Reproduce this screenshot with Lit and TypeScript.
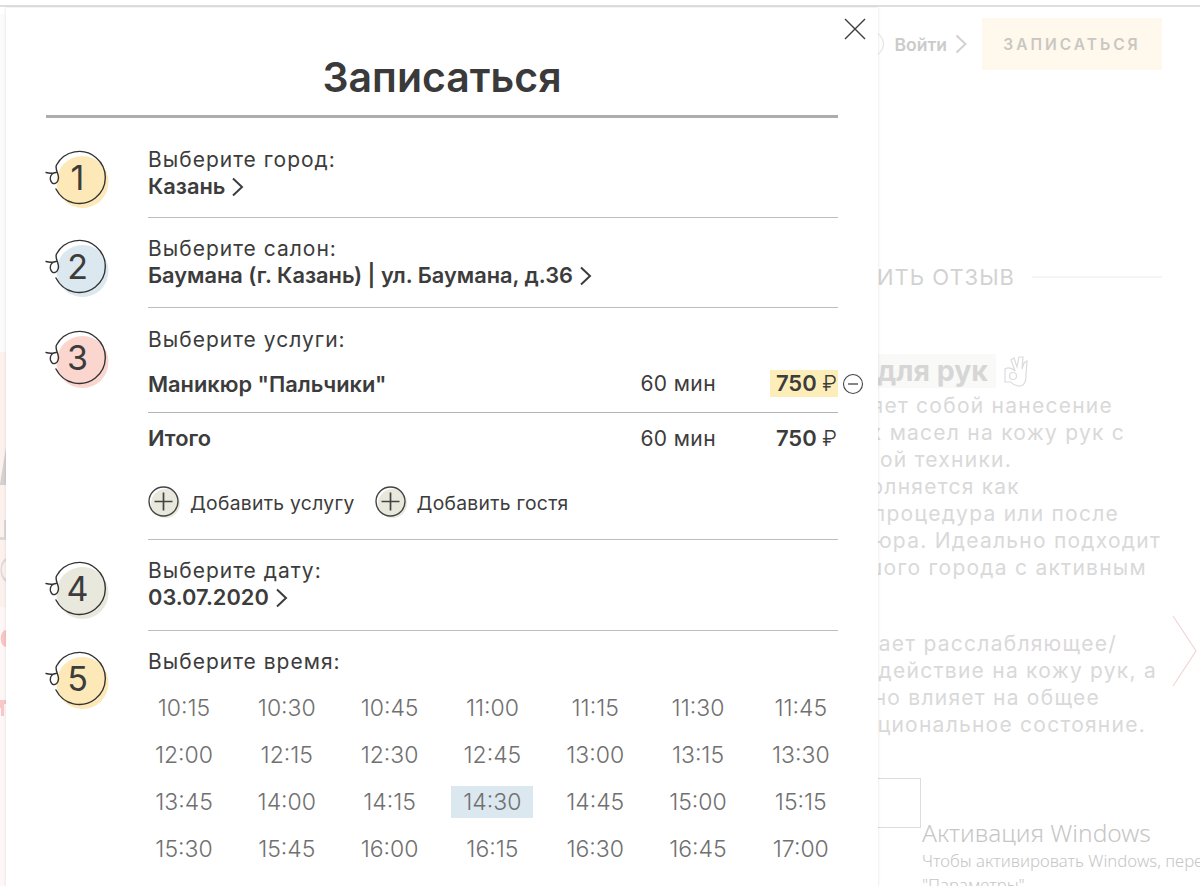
import { LitElement, html, css, svg } from "lit";
import { customElement } from "lit/decorators.js";

const TIMES = [
  "10:15","10:30","10:45","11:00","11:15","11:30","11:45",
  "12:00","12:15","12:30","12:45","13:00","13:15","13:30",
  "13:45","14:00","14:15","14:30","14:45","15:00","15:15",
  "15:30","15:45","16:00","16:15","16:30","16:45","17:00",
];

const PARA1 = [
  ["Представляет собой нанесение", 1113],
  ["эфирных масел на кожу рук с", 1125],
  ["специальной техники.", 1012],
  ["Выполняется как", 1020],
  ["отдельная процедура или после", 1119],
  ["маникюра. Идеально подходит", 1161],
  ["жителей большого города с активным", 1147],
] as const;
const PARA2 = [
  ["Оказывает расслабляющее/", 1117],
  ["воздействие на кожу рук, а", 1157],
  ["положительно влияет на общее", 1100],
  ["эмоциональное состояние.", 1146],
] as const;

const chevron = svg`<path d="M1.5 1.5l9 8.5-9 8.5" fill="none" stroke="currentColor" stroke-width="2"/>`;

function badge(n: number, color: string) {
  return html`<div class="badge">
    <svg class="ring" viewBox="0 0 66 62" width="66" height="62">
      <circle cx="38.5" cy="33" r="26" fill=${color}></circle>
      <path d="M12 40 A26 26 0 1 0 12.500 16 C10.500 20 15 25 14.500 29 C14 35 8 37 6.500 31 C5.500 26 9 23.500 12 23.500 M2 23.500 Q7 25 12 23.500"
        fill="none" stroke="#333" stroke-width="1.4" stroke-linecap="round"></path>
    </svg>
    <span class="num">${n}</span>
  </div>`;
}

function plus() {
  return html`<svg class="plus" viewBox="0 0 34 34" width="34" height="34">
    <circle cx="17.5" cy="17.5" r="14.5" fill="#e8e8dc"></circle>
    <circle cx="15.5" cy="15.5" r="14.5" fill="none" stroke="#444" stroke-width="1.4"></circle>
    <path d="M15.5 6.5v18M6.5 15.5h18" stroke="#444" stroke-width="1.7" fill="none"></path>
  </svg>`;
}

@customElement("app-root")
export class AppRoot extends LitElement {
  static styles = css`
    :host { display: block; width: 1200px; height: 886px; overflow: hidden; position: relative; background: #fff;
      font-family: Inter, "Noto Sans", sans-serif; color: #3c3c3c; }
    .topline { height: 2px; margin-top: 5px; background: #dedede; }

    /* dimmed page behind the dialog */
    .page { position: absolute; inset: 7px 0 0 0; overflow: hidden; }
    .strip { position: absolute; left: 0; top: 7px; width: 6px; height: 872px; }
    .pagehead { display: flex; justify-content: flex-end; align-items: center; padding: 11px 38px 0 0; height: 52px; }
    .login { display: flex; align-items: center; gap: 8px; font-size: 17.5px; font-weight: 600; color: #cbcbcb; margin-right: 14px; }
    .login svg { color: #cfcfcf; }
    .avatar { width: 24px; height: 24px; border: 1px solid #ddd; border-radius: 50%; margin-right: 11px; }
    .cta { width: 180px; height: 52px; background: #fef9ec; color: #c9c7c2; font-size: 15.5px; font-weight: 600;
      letter-spacing: 3px; display: flex; align-items: center; justify-content: center; }
    .review { display: flex; justify-content: flex-end; align-items: center; gap: 17px; margin-top: 194px; padding-right: 38px; }
    .review span { font-size: 22px; color: #d2d2d2; letter-spacing: 1px; white-space: nowrap; }
    .review i { width: 130px; height: 2px; background: #f5f5f5; }
    .heading { display: flex; justify-content: flex-end; align-items: center; margin-top: 64px; padding-right: 172px; gap: 8px; }
    .heading b { font-size: 28.5px; font-weight: 700; color: #d6d6d6; background: #f9f9f7; padding: 0 8px 0 300px; line-height: 34px; white-space: nowrap; }
    .para { margin-top: 4px; }
    .para2 { margin-top: 49px; }
    .line { font-size: 21px; line-height: 27px; letter-spacing: 1.25px; color: #d9d9d9; white-space: nowrap;
      display: flex; justify-content: flex-end; }
    .nextarrow { position: absolute; right: 2px; top: 608px; }
    .outline { position: absolute; left: 700px; top: 771px; width: 219px; height: 48px; border: 1px solid #ddd; }
    .watermark { position: absolute; left: 922px; top: 817px; color: #c6c6c6; font-family: "Noto Sans", sans-serif; white-space: nowrap; }
    .watermark div { font-size: 16.8px; line-height: 24px; font-weight: 300; }
    .watermark div.wm-title { font-size: 24.5px; font-weight: 300; line-height: 32px; }

    /* dialog */
    .modal { position: absolute; left: 6px; top: 8px; width: 872px; height: 878px; box-sizing: border-box; background: #fff;
      box-shadow: 0 0 3px rgba(0,0,0,.12); padding: 0 40px; }
    .close { position: absolute; left: 838px; top: 10px; }
    h1 { margin: 0; height: 110px; box-sizing: border-box; padding-top: 44px; text-align: center; font-size: 41px; line-height: 50px;
      font-weight: 600; color: #3a3a3a; border-bottom: 3px solid #adadad; }
    .step { display: flex; }
    .step + .step .body { border-top: 1px solid #bdbdbd; }
    .side { width: 102px; flex: none; }
    .body { flex: 1; min-width: 0; }
    .badge { position: relative; width: 66px; height: 62px; margin-left: -2px; display: flex; align-items: center; justify-content: center; }
    .ring { position: absolute; left: 0; top: 0; }
    .num { position: relative; font-size: 34px; line-height: 58px; padding-bottom: 4px; font-weight: 400; color: #3c3c3c; margin-left: 1px; }
    .label { font-size: 21px; line-height: 27px; letter-spacing: 1px; color: #3c3c3c; white-space: nowrap; }
    .value { font-size: 21.8px; line-height: 27px; font-weight: 600; color: #3c3c3c; display: flex; align-items: center; gap: 6px; white-space: nowrap; }
    .value svg { margin-top: 1px; flex: none; }

    .s1 { height: 99px; box-sizing: border-box; }
    .s1 .body { border-top: none; padding-top: 28px; }
    .s1 .side { padding-top: 31px; }
    .s2 .body { padding-top: 17px; height: 90px; box-sizing: border-box; }
    .s2 .side { padding-top: 21px; }
    .s3 .body { padding-top: 18px; height: 232px; box-sizing: border-box; }
    .s3 .side { padding-top: 22px; }
    .s4 .body { padding-top: 17px; height: 91px; box-sizing: border-box; }
    .s4 .side { padding-top: 21px; }
    .s5 .body { padding-top: 17px; }
    .s5 .side { padding-top: 20px; }

    .svc { display: grid; grid-template-columns: 1fr 90px 122px; align-items: center; position: relative;
      font-size: 21.8px; font-weight: 600; white-space: nowrap; }
    .svc .dur { font-weight: 400; font-size: 21px; text-align: right; letter-spacing: .4px; }
    .price { justify-self: end; font-size: 22px; height: 27px; line-height: 27px; padding: 0 1px 0 6px; white-space: nowrap; }
    .price em { font-style: normal; font-weight: 300; }
    .hl { background: #fdeeb9; }
    .minus { position: absolute; right: -26px; top: 20px; }
    .svc.first { height: 60px; box-sizing: border-box; padding-top: 2px; border-bottom: 1px solid #b5b5b5; }
    .svc.total { height: 50px; }
    .adds { display: flex; gap: 20px; margin-top: 23px; }
    .add { display: flex; align-items: center; gap: 8px; font-size: 19.3px; letter-spacing: .3px; white-space: nowrap; }
    .plus { flex: none; }

    .times { display: grid; grid-template-columns: repeat(7, 82px); column-gap: 20.8px; row-gap: 15px; margin-top: 17px; margin-left: -5px; }
    .t { height: 32px; line-height: 32px; text-align: center; font-size: 23px; font-weight: 300; color: #707070; }
    .t.sel { background: #dce8ef; }
  `;

  render() {
    return html`
      <div class="topline"></div>
      <div class="page">
        <svg class="strip" viewBox="0 0 6 872" width="6" height="872">
          <rect y="0" width="6" height="338" fill="#fbfbfb"></rect>
          <rect y="338" width="6" height="255" fill="#fdf1ee"></rect>
          <rect y="593" width="6" height="279" fill="#fdf8f7"></rect>
          <path d="M0 470L6 433V471H0Z" fill="#d4d2d0"></path>
          <path d="M4 506h2v20H0v-3h4Z" fill="#dcdad8"></path>
          <path d="M6 544a9 13 0 0 0 0 24v-3a7 10 0 0 1 0-18Z" fill="#dcdad8"></path>
          <path d="M6 616a5 8 0 0 0 0 17Z" fill="#f8c4c4"></path>
          <path d="M0 686h6v4H4v12H1v-8H0Z" fill="#f8c8c8"></path>
        </svg>
        <div class="pagehead">
          <div class="avatar"></div>
          <div class="login">
            Войти
            <svg width="13" height="20" viewBox="0 0 13 20">
              <path d="M1.5 1.5l9 8.5-9 8.5" fill="none" stroke="currentColor" stroke-width="1.8"></path>
            </svg>
          </div>
          <div class="cta">ЗАПИСАТЬСЯ</div>
        </div>
        <div class="review"><span>ОСТАВИТЬ ОТЗЫВ</span><i></i></div>
        <div class="heading">
          <b>Ароматерапия для рук</b>
          <svg width="24" height="32" viewBox="0 0 24 32" fill="none" stroke="#dcdcdc" stroke-width="1.2">
            <path d="M1 14V27H7C9 30 13 31 17 31C21 30 22 26 22 20L23 6L20 8L18 14L19 2L15 2L13 12L10 3L7 5L11 16C7 12 4 12 1 14Z"></path>
            <circle cx="9" cy="21" r="3.5"></circle>
          </svg>
        </div>
        <div class="para">
          ${PARA1.map(([t, end]) => html`<div class="line" style="padding-right:${1200 - end}px">${t}</div>`)}
        </div>
        <div class="para2">
          ${PARA2.map(([t, end]) => html`<div class="line" style="padding-right:${1200 - end}px">${t}</div>`)}
        </div>
        <svg class="nextarrow" width="26" height="72" viewBox="0 0 26 72">
          <path d="M1 1l23 35L1 71" fill="none" stroke="#f3d6d6" stroke-width="1.2"></path>
        </svg>
        <div class="outline"></div>
      </div>
      <div class="watermark">
        <div class="wm-title">Активация Windows</div>
        <div>Чтобы активировать Windows, перейдите в раздел</div>
        <div>"Параметры".</div>
      </div>

      <div class="modal">
        <svg class="close" width="22" height="22" viewBox="0 0 22 22">
          <path d="M1 1l20 20M21 1L1 21" stroke="#3c3c3c" stroke-width="1.4" fill="none"></path>
        </svg>
        <h1>Записаться</h1>

        <div class="step s1">
          <div class="side">${badge(1, "#fde9b8")}</div>
          <div class="body">
            <div class="label">Выберите город:</div>
            <div class="value">Казань <svg width="13" height="20" viewBox="0 0 12 20">${chevron}</svg></div>
          </div>
        </div>

        <div class="step s2">
          <div class="side">${badge(2, "#dce8ef")}</div>
          <div class="body">
            <div class="label">Выберите салон:</div>
            <div class="value">Баумана (г. Казань) | ул. Баумана, д.36 <svg width="13" height="20" viewBox="0 0 12 20">${chevron}</svg></div>
          </div>
        </div>

        <div class="step s3">
          <div class="side">${badge(3, "#fad6cf")}</div>
          <div class="body">
            <div class="label">Выберите услуги:</div>
            <div class="svc first">
              <span>Маникюр "Пальчики"</span>
              <span class="dur">60 мин</span>
              <span class="price hl">750 <em>₽</em></span>
              <svg class="minus" width="22" height="22" viewBox="0 0 22 22">
                <circle cx="11" cy="11" r="9.5" fill="none" stroke="#444" stroke-width="1.1"></circle>
                <path d="M6 11h10" stroke="#444" stroke-width="1.3"></path>
              </svg>
            </div>
            <div class="svc total">
              <span>Итого</span>
              <span class="dur">60 мин</span>
              <span class="price">750 <em>₽</em></span>
            </div>
            <div class="adds">
              <div class="add">${plus()}Добавить услугу</div>
              <div class="add">${plus()}Добавить гостя</div>
            </div>
          </div>
        </div>

        <div class="step s4">
          <div class="side">${badge(4, "#e8e8dc")}</div>
          <div class="body">
            <div class="label">Выберите дату:</div>
            <div class="value">03.07.2020 <svg width="13" height="20" viewBox="0 0 12 20">${chevron}</svg></div>
          </div>
        </div>

        <div class="step s5">
          <div class="side">${badge(5, "#fde9b8")}</div>
          <div class="body">
            <div class="label">Выберите время:</div>
            <div class="times">
              ${TIMES.map((t) => html`<div class="t ${t === "14:30" ? "sel" : ""}">${t}</div>`)}
            </div>
          </div>
        </div>
      </div>
    `;
  }
}
